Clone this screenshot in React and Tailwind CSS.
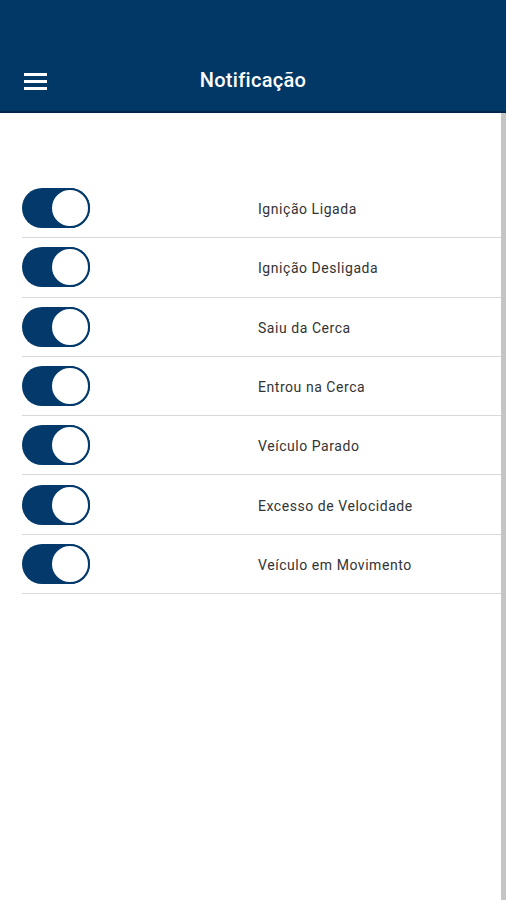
import React from 'react';

const items = [
  'Ignição Ligada',
  'Ignição Desligada',
  'Saiu da Cerca',
  'Entrou na Cerca',
  'Veículo Parado',
  'Excesso de Velocidade',
  'Veículo em Movimento',
];

function Toggle() {
  return (
    <div className="relative w-[68px] h-[40px] rounded-full bg-[#033a6b] shrink-0">
      <div className="absolute right-0 top-0 w-[40px] h-[40px] rounded-full bg-white border-2 border-[#033a6b]" />
    </div>
  );
}

export default function App() {
  return (
    <div className="w-[506px] h-[900px] bg-white flex flex-col overflow-hidden" style={{ fontFamily: 'Roboto, "Liberation Sans", sans-serif' }}>
      <header className="h-[113px] bg-[#023866] border-b-2 border-[#01264d] flex items-end pb-[21px] relative shrink-0">
        <div className="pl-[24px] flex flex-col gap-[4px]">
          <span className="block w-[23px] h-[3px] bg-white" />
          <span className="block w-[23px] h-[3px] bg-white" />
          <span className="block w-[23px] h-[3px] bg-white" />
        </div>
        <h1 className="absolute left-0 right-0 bottom-[16px] text-center text-white text-[20px] font-medium tracking-[0.3px]">Notificação</h1>
      </header>
      <div className="flex flex-1">
        <div className="flex-1 pt-[66px] pl-[22px]">
          {items.map((label) => (
            <div key={label} className="h-[59.3px] flex items-center border-b border-[#d9d9d9]">
              <Toggle />
              <span className="ml-[168px] mt-[3px] text-[14px] tracking-[0.55px] text-[#333333]">{label}</span>
            </div>
          ))}
        </div>
        <div className="w-[5px] bg-[#c4c4c4]" />
      </div>
    </div>
  );
}
